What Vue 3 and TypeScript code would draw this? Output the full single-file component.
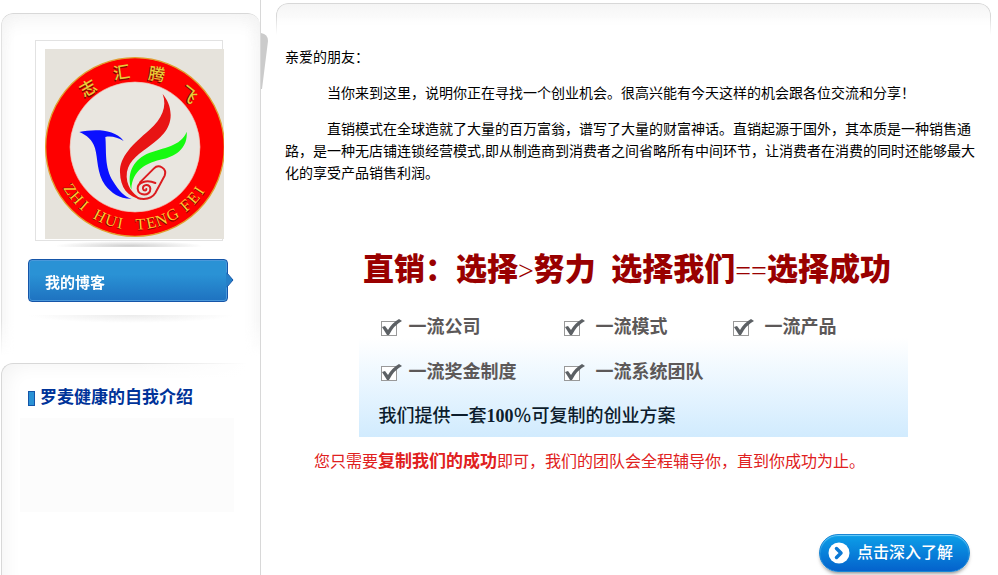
<script setup lang="ts">
interface Glyph {
  char: string
  angle: number
}

interface SealMark extends Glyph {
  x: number
  y: number
}

const sealMarks: SealMark[] = [
  { char: '志', x: 175, y: 160, angle: -30 },
  { char: '汇', x: 275, y: 113, angle: -8 },
  { char: '腾', x: 380, y: 119, angle: 8 },
  { char: '飞', x: 475, y: 180, angle: 38 },
]

const sealLetters: Glyph[] = [
  { char: 'Z', angle: 57 },
  { char: 'H', angle: 49 },
  { char: 'I', angle: 41 },
  { char: 'H', angle: 27 },
  { char: 'U', angle: 18 },
  { char: 'I', angle: 11 },
  { char: 'T', angle: -4 },
  { char: 'E', angle: -12 },
  { char: 'N', angle: -20 },
  { char: 'G', angle: -29 },
  { char: 'F', angle: -41 },
  { char: 'E', angle: -49 },
  { char: 'I', angle: -56 },
]

const advantages: string[] = ['一流公司', '一流模式', '一流产品', '一流奖金制度', '一流系统团队']
</script>

<template>
  <div class="page">
    <aside class="sidebar">
      <section class="card profile">
        <div class="photo">
          <svg class="seal" viewBox="45 42 537 570" role="img" aria-label="志汇腾飞">
            <rect x="45" y="42" width="537" height="570" fill="#e6e3dc" />
            <circle cx="315" cy="336" r="268" fill="#fe0000" stroke="#e0a030" stroke-width="4" />
            <circle cx="315" cy="336" r="195" fill="#e9e6e0" stroke="#f4c0b0" stroke-width="2" />
            <path fill="#0a10ff" d="M148 291C190 283 252 280 281 318C262 306 242 302 226 306C230 345 222 398 250 440C265 465 285 487 305 491C270 492 245 475 225 450C200 415 204 370 195 340C188 315 170 300 148 291Z" />
            <path fill="#e81414" d="M398 177C412 215 396 252 358 285C308 328 269 365 270 412C271 458 292 486 335 494C318 480 292 465 290 425C289 385 318 362 352 338C390 310 422 285 422 240C421 212 412 195 398 177Z" />
            <path fill="#16fa10" d="M470 290C474 335 442 362 400 372C350 383 306 404 304 464C290 420 306 378 350 357C402 336 452 335 470 290Z" />
            <g fill="none" stroke="#dc1c20" stroke-width="6" stroke-linecap="round">
              <path d="M330 442L372 400C386 386 412 400 404 422L376 474C366 490 345 494 325 490" />
              <path d="M376 444C352 434 322 440 323 461C324 484 362 485 361 461C359 445 337 447 339 461C341 469 350 468 349 462" />
            </g>
            <g v-for="mark in sealMarks" :key="mark.char" class="mark" :transform="`translate(${mark.x} ${mark.y}) rotate(${mark.angle})`">
              <text class="mark-shade" x="-4" y="21">{{ mark.char }}</text>
              <text x="0" y="17">{{ mark.char }}</text>
            </g>
            <g v-for="letter in sealLetters" :key="letter.angle" class="letter" :transform="`translate(315 336) rotate(${letter.angle})`">
              <text class="letter-shade" x="-3" y="251">{{ letter.char }}</text>
              <text x="0" y="248">{{ letter.char }}</text>
            </g>
          </svg>
        </div>
        <div class="photo-shadow"></div>
        <a class="ribbon" href="#blog">
          我的博客
          <svg class="ribbon-tip" viewBox="0 0 8 16" aria-hidden="true">
            <path d="M0 0L7 8L0 16Z" fill="#2580c8" />
            <path d="M1 1L7 8L1 15" fill="none" stroke="#1555a8" />
          </svg>
        </a>
        <div class="divider"></div>
      </section>
      <section class="card intro">
        <h2 class="intro-title">罗麦健康的自我介绍</h2>
        <div class="intro-body"></div>
      </section>
      <svg class="fold" viewBox="0 0 8 56" aria-hidden="true">
        <path d="M0 0Q7 1 7 8L1 56H0Z" fill="#cbcbcb" />
      </svg>
    </aside>

    <main class="content">
      <article class="letter-body">
        <p>亲爱的朋友：</p>
        <p class="indent">当你来到这里，说明你正在寻找一个创业机会。很高兴能有今天这样的机会跟各位交流和分享！</p>
        <p class="indent">直销模式在全球造就了大量的百万富翁，谱写了大量的财富神话。直销起源于国外，其本质是一种销售通路，是一种无店铺连锁经营模式,即从制造商到消费者之间省略所有中间环节，让消费者在消费的同时还能够最大化的享受产品销售利润。</p>
      </article>

      <section class="banner">
        <h1 class="slogan">直销：选择<span class="sign">&gt;</span>努力&nbsp; 选择我们<span class="sign">==</span>选择成功</h1>
        <div class="panel">
          <ul class="advantages">
            <li v-for="item in advantages" :key="item">
              <svg class="check" viewBox="0 0 21 18" aria-hidden="true">
                <rect x="0.5" y="2.5" width="15" height="14" fill="#fff" stroke="#999" />
                <path d="M1 8L4 7L7 11Q11 4 18 0L21 2Q13 6 8 16H6Z" fill="#5c6064" />
              </svg>
              <span>{{ item }}</span>
            </li>
          </ul>
          <p class="offer">我们提供一套<b>100</b>％可复制的创业方案</p>
        </div>
      </section>

      <p class="promise">您只需要<strong>复制我们的成功</strong>即可，我们的团队会全程辅导你，直到你成功为止。</p>

      <a class="more" href="#more">
        <svg class="more-icon" viewBox="0 0 22 22" aria-hidden="true">
          <circle cx="11" cy="11" r="10.5" fill="#fff" />
          <path d="M8.5 6.500L13 11L8.500 15.500" fill="none" stroke="#0b78d4" stroke-width="3.500" stroke-linecap="round" stroke-linejoin="round" />
        </svg>
        <span>点击深入了解</span>
      </a>
    </main>
  </div>
</template>

<style>
body {
  margin: 0;
  background: #fff;
}
</style>

<style scoped>
.page {
  display: grid;
  grid-template-columns: 261px minmax(0, 1fr);
  min-height: 100vh;
  box-sizing: border-box;
  font-family: "Liberation Sans", "Noto Sans CJK SC", sans-serif;
  font-size: 14px;
  line-height: 22px;
  color: #000;
}

p,
h1,
h2,
ul {
  margin: 0;
  padding: 0;
}

a {
  text-decoration: none;
}

.sidebar {
  position: relative;
  display: flex;
  flex-direction: column;
  box-sizing: border-box;
  padding: 13px 0 0 1px;
  border-right: 1px solid #d8d8d8;
}

.card {
  box-sizing: border-box;
  border: 1px solid #d8d8d8;
  border-right: 0;
  border-bottom: 0;
}

.profile {
  height: 350px;
  padding: 26px 26px 0;
  border-color: #d8d8d8 transparent transparent #e2e2e2;
  border-radius: 12px 12px 0 0;
  box-shadow: inset 0 12px 20px -6px #f3f3f3, inset 8px 0 16px -6px #f5f5f5, inset -10px 0 16px -6px #f4f4f4;
  mask-image: linear-gradient(#000 88%, transparent 98%);
}

.photo {
  width: 188px;
  height: 201px;
  box-sizing: border-box;
  margin-left: 7px;
  padding: 8px 0 0 9px;
  border: 1px solid #e2e2e2;
  background: #fff;
}

.seal {
  display: block;
  width: 179px;
  height: 190px;
}

.mark text {
  font-family: "Noto Sans CJK SC", sans-serif;
  font-size: 50px;
  font-weight: 500;
  text-anchor: middle;
  fill: #e8cc38;
}

.letter text {
  font-family: "Liberation Serif", serif;
  font-size: 48px;
  text-anchor: middle;
  fill: #ffc832;
}

.mark .mark-shade,
.letter .letter-shade {
  fill: #7c0c00;
}

.photo-shadow {
  width: 150px;
  height: 6px;
  margin: 0 26px 12px;
  background: radial-gradient(ellipse at 50% 80%, #cfcfcf, transparent 70%);
}

.ribbon {
  position: relative;
  display: block;
  box-sizing: border-box;
  width: 200px;
  height: 43px;
  padding: 3px 16px 0;
  border: 1px solid #1555a8;
  border-radius: 4px;
  background: linear-gradient(#2a92d5 35%, #1e72c0);
  box-shadow: inset 0 0 0 1px #4a98da;
  color: #fff;
  font-size: 15px;
  font-weight: 700;
  line-height: 40px;
}

.ribbon-tip {
  position: absolute;
  top: 12px;
  left: 197px;
  width: 8px;
  height: 16px;
}

.divider {
  height: 8px;
  margin-top: 13px;
  background: radial-gradient(ellipse at 50% 0, #ebebeb, transparent 70%);
}

.intro {
  position: relative;
  flex: 1;
  padding: 22px 26px 0 18px;
  border-top-left-radius: 12px;
  box-shadow: inset 12px 10px 18px -8px #f4f4f4;
}

.intro::before {
  content: "";
  position: absolute;
  inset: -1px 0 auto 50%;
  height: 24px;
  background: linear-gradient(90deg, transparent, #fff 90%);
}

.intro-title {
  display: flex;
  align-items: center;
  gap: 5px;
  margin: 0 0 8px 8px;
  color: #039;
  font-size: 17px;
  line-height: 24px;
}

.intro-title::before {
  content: "";
  box-sizing: border-box;
  width: 7px;
  height: 15px;
  border: 1px solid #1555a8;
  background: #2a92d5;
}

.intro-body {
  height: 94px;
  background: #fcfcfc;
}

.fold {
  position: absolute;
  top: 33px;
  left: 261px;
  width: 8px;
  height: 56px;
}

.content {
  position: relative;
  display: flex;
  flex-direction: column;
  margin: 3px 7px 0 15px;
  padding: 43px 10px 3px 9px;
}

.content::before {
  content: "";
  position: absolute;
  inset: 0 0 auto;
  height: 32px;
  box-sizing: border-box;
  border: 1px solid #d8d8d8;
  border-bottom: 0;
  border-radius: 12px 12px 0 0;
  background: linear-gradient(#f5f5f5, #fff 75%);
  mask-image: linear-gradient(#000 40%, transparent);
}

.letter-body {
  display: flex;
  flex-direction: column;
  gap: 14px;
}

.indent {
  text-indent: 3em;
}

.banner {
  margin-top: 66px;
}

.slogan {
  padding-left: 78px;
  color: #900;
  font-family: "Liberation Serif", "Noto Sans CJK SC", serif;
  font-size: 31px;
  font-weight: 900;
  line-height: 40px;
}

.sign {
  font-size: 28px;
  font-weight: 400;
}

.panel {
  max-width: 549px;
  box-sizing: border-box;
  margin: 14px auto 0;
  padding-left: 20px;
  background: linear-gradient(#fff 25%, #d1ebfe);
}

.advantages {
  display: grid;
  grid-template-columns: 183px 169px 1fr;
  padding-left: 2px;
  list-style: none;
  color: #5c5858;
  font-size: 18px;
  font-weight: 700;
  line-height: 45px;
}

.advantages li {
  display: flex;
  align-items: center;
  gap: 11px;
  white-space: nowrap;
}

.advantages li:nth-child(3n + 1) {
  gap: 7px;
}

.check {
  width: 21px;
  height: 18px;
}

.offer {
  color: #0c1c2c;
  font-family: "Liberation Serif", "Noto Sans CJK SC", serif;
  font-size: 18px;
  font-weight: 500;
  line-height: 42px;
}

.promise {
  margin: 13px 0 0 29px;
  color: #e02020;
  font-size: 16px;
  line-height: 24px;
}

.promise strong {
  font-size: 17px;
}

.more {
  display: flex;
  align-items: center;
  align-self: flex-end;
  gap: 7px;
  box-sizing: border-box;
  height: 38px;
  margin: 60px 11px 0 0;
  padding: 0 16px 0 8px;
  border: 1px solid #1a86d4;
  border-radius: 19px;
  background: linear-gradient(#0c9fe8, #0462cc);
  box-shadow: inset 0 1px 1px #6cccf8, 0 3px 4px -2px #777;
  color: #fff;
  font-size: 16px;
  font-weight: 500;
}

.more-icon {
  width: 22px;
  height: 22px;
}
</style>
